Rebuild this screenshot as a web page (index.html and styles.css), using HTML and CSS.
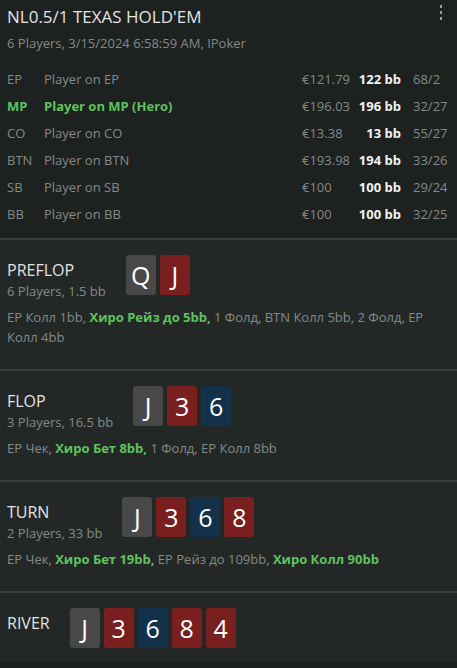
FILE: index.html
```html
<!DOCTYPE html>
<html lang="ru">
<head>
<meta charset="utf-8">
<title>NL0.5/1 Texas Hold'em</title>
<link rel="stylesheet" href="styles.css">
</head>
<body>
<div class="hand">
  <header class="hand-head">
    <div class="head-top">
      <h1 class="hand-title">NL0.5/1 TEXAS HOLD'EM</h1>
      <button class="kebab" aria-label="Menu"><span></span><span></span><span></span></button>
    </div>
    <div class="hand-meta">6 Players, 3/15/2024 6:58:59 AM, IPoker</div>
    <div class="players">
      <div class="row"><span class="pos">EP</span><span class="name">Player on EP</span><span class="amt">€121.79</span><span class="bb">122 bb</span><span class="ratio">68/2</span></div>
      <div class="row hero"><span class="pos">MP</span><span class="name">Player on MP (Hero)</span><span class="amt">€196.03</span><span class="bb">196 bb</span><span class="ratio">32/27</span></div>
      <div class="row"><span class="pos">CO</span><span class="name">Player on CO</span><span class="amt">€13.38</span><span class="bb">13 bb</span><span class="ratio">55/27</span></div>
      <div class="row"><span class="pos">BTN</span><span class="name">Player on BTN</span><span class="amt">€193.98</span><span class="bb">194 bb</span><span class="ratio">33/26</span></div>
      <div class="row"><span class="pos">SB</span><span class="name">Player on SB</span><span class="amt">€100</span><span class="bb">100 bb</span><span class="ratio">29/24</span></div>
      <div class="row"><span class="pos">BB</span><span class="name">Player on BB</span><span class="amt">€100</span><span class="bb">100 bb</span><span class="ratio">32/25</span></div>
    </div>
  </header>

  <section class="street">
    <div class="street-head">
      <div class="street-info">
        <div class="street-name">PREFLOP</div>
        <div class="street-sub">6 Players, 1.5 bb</div>
      </div>
      <div class="cards">
        <span class="card grey">Q</span><span class="card red">J</span>
      </div>
    </div>
    <p class="actions"><span class="act">EP Колл 1bb, </span><span class="act me">Хиро Рейз до 5bb,</span><span class="act"> 1 Фолд, BTN Колл 5bb, 2 Фолд, EP</span><span class="act"> Колл 4bb</span></p>
  </section>

  <section class="street">
    <div class="street-head">
      <div class="street-info">
        <div class="street-name">FLOP</div>
        <div class="street-sub">3 Players, 16.5 bb</div>
      </div>
      <div class="cards">
        <span class="card grey">J</span><span class="card red">3</span><span class="card blue">6</span>
      </div>
    </div>
    <p class="actions"><span class="act">EP Чек, </span><span class="act me">Хиро Бет 8bb,</span><span class="act"> 1 Фолд, EP Колл 8bb</span></p>
  </section>

  <section class="street">
    <div class="street-head">
      <div class="street-info">
        <div class="street-name">TURN</div>
        <div class="street-sub">2 Players, 33 bb</div>
      </div>
      <div class="cards">
        <span class="card grey">J</span><span class="card red">3</span><span class="card blue">6</span><span class="card red">8</span>
      </div>
    </div>
    <p class="actions"><span class="act">EP Чек, </span><span class="act me">Хиро Бет 19bb,</span><span class="act"> EP Рейз до 109bb, </span><span class="act me">Хиро Колл 90bb</span></p>
  </section>

  <section class="street last">
    <div class="street-head">
      <div class="street-info">
        <div class="street-name">RIVER</div>
      </div>
      <div class="cards">
        <span class="card grey">J</span><span class="card red">3</span><span class="card blue">6</span><span class="card red">8</span><span class="card red">4</span>
      </div>
    </div>
  </section>
</div>
</body>
</html>
```
FILE: styles.css
```css
* { box-sizing: border-box; }
html, body {
  margin: 0;
  padding: 0;
  background: #1b1f1e;
}
body {
  font-family: "Open Sans", "Noto Sans", sans-serif;
  color: #8b8f8d;
  font-size: 13px;
}
.hand { width: 457px; }

.hand-head {
  background: #1d2120;
  padding: 5px 10px 11px 7px;
}
.head-top {
  display: flex;
  justify-content: space-between;
  align-items: flex-start;
}
.hand-title {
  margin: 0;
  font-size: 17px;
  font-weight: 400;
  line-height: 24px;
  color: #e2e3e3;
}
.kebab {
  display: flex;
  flex-direction: column;
  gap: 3px;
  padding: 0;
  margin: 0 5px 0 0;
  background: none;
  border: 0;
}
.kebab span {
  width: 2px;
  height: 3px;
  background: #9a9d9c;
  display: block;
}
.hand-meta {
  margin-top: 4px;
  line-height: 20px;
  font-size: 13px;
  color: #858987;
}
.players { margin-top: 12px; }
.row {
  display: grid;
  grid-template-columns: 37px 1fr 53px 46px 46px;
  height: 27px;
  align-items: center;
  line-height: 20px;
  color: #858987;
}
.row .bb {
  text-align: right;
  color: #f1f2f2;
  font-weight: 700;
}
.row .ratio { padding-left: 12px; }
.row.hero .pos,
.row.hero .name {
  color: #5fc25f;
  font-weight: 700;
}

.street {
  background: #232826;
  border-top: 2px solid #383d3c;
  padding: 15px 10px 22px 7px;
}
.street.last { padding-bottom: 14px; }
.street-head {
  display: flex;
  align-items: flex-start;
  gap: 20px;
}
.street-name {
  font-size: 16px;
  line-height: 24px;
  padding-top: 3px;
  color: #e2e3e3;
}
.street-sub {
  font-size: 13px;
  line-height: 20px;
  margin-top: -1px;
  color: #858987;
}
.cards {
  display: flex;
  gap: 4px;
}
.card {
  width: 30px;
  height: 40px;
  border-radius: 3px;
  color: #ffffff;
  font-size: 25px;
  line-height: 41px;
  text-align: center;
}
.card.grey { background: #484848; }
.card.red { background: #7a1f1f; }
.card.blue { background: #14314b; }
.actions {
  margin: 6px 0 0;
  line-height: 20px;
  font-size: 13px;
  color: #858987;
}
.me {
  color: #5fc25f;
  font-weight: 700;
}
```
